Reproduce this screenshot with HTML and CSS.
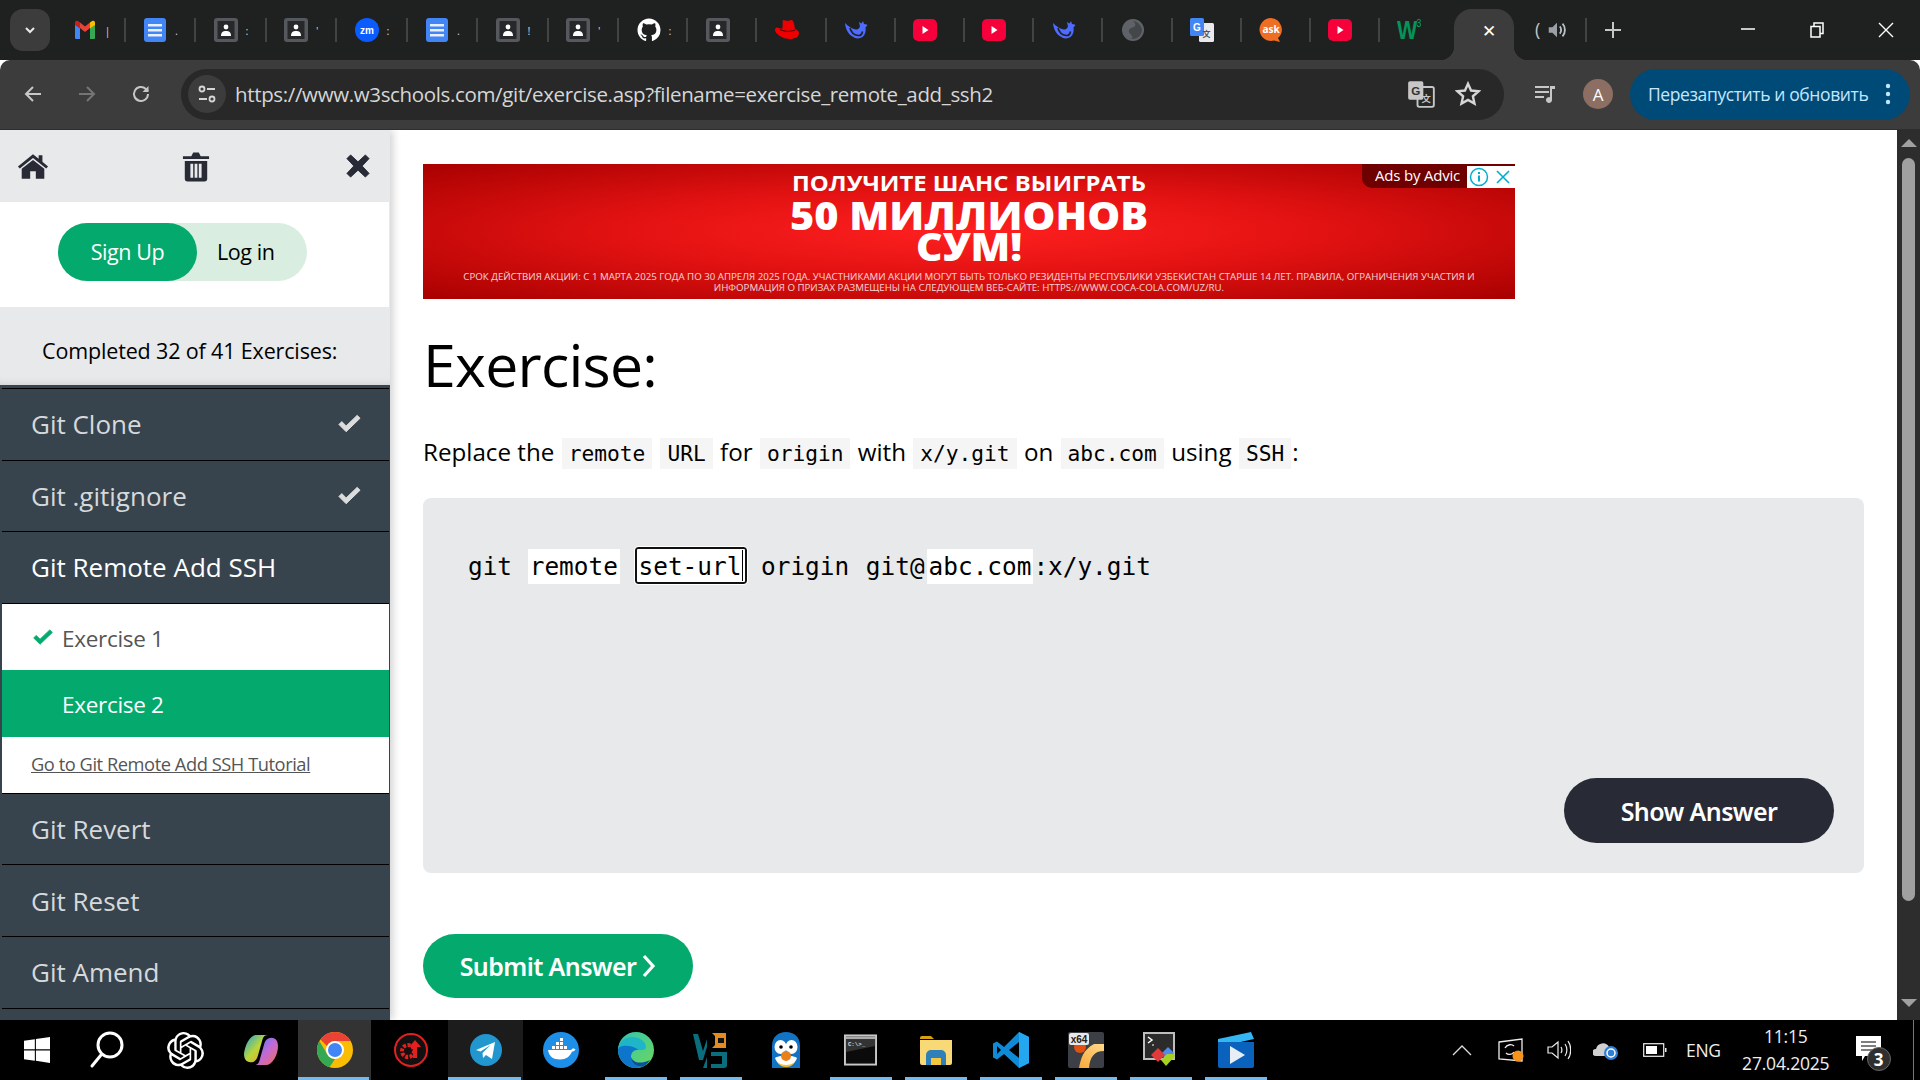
FILE: index.html
```html
<!DOCTYPE html>
<html lang="ru">
<head>
<meta charset="utf-8">
<title>W3Schools Git Exercise</title>
<link rel="stylesheet" href="styles.css">
</head>
<body>
<svg class="defs" aria-hidden="true">
  <symbol id="i-docs" viewBox="0 0 24 24"><rect x="1" width="22" height="24" rx="3" fill="#4285f4"/><path d="M5 6h14v2.4H5zM5 11h14v2.4H5zM5 16h14v2.4H5z" fill="#e8eefc"/></symbol>
  <symbol id="i-contact" viewBox="0 0 24 24"><rect x="0" y="0" width="24" height="24" rx="3" fill="#55585c"/><rect x="3.500" y="3" width="17" height="18" fill="#26282a"/><circle cx="12" cy="9" r="2.400" fill="#fff"/><path d="M7 18c0-4 2-5 5-5s5 1 5 5z" fill="#fff"/></symbol>
  <symbol id="i-yt" viewBox="0 0 24 24"><rect x="0" y="1" width="24" height="22" rx="5" fill="#f5003b"/><path d="M9.500 8v8l6-4z" fill="#fff"/></symbol>
  <symbol id="i-whale" viewBox="0 0 24 24"><path d="M1 5c3 3 7 6 11 6.500 2 .2 3-1 4-3L15 4l2.500 1.500L19 3l1 3c2 0 3.500 1 3.500 1l-2 2.500c.5 3 0 7-3 9.500-3 2-7 2-10-.5C4 16 1.500 11 1 5z" fill="#4d6bfe"/><path d="M6 10c1 4 4 7 8 7.500 2 .2 4-1 4.500-4" stroke="#1f2120" stroke-width="1.600" fill="none"/></symbol>
</svg>

<header class="tabstrip">
  <div class="tabsearch"><svg width="14" height="14" viewBox="0 0 14 14"><path d="M3 5l4 4 4-4" fill="none" stroke="#e8eaed" stroke-width="2"/></svg></div>
  <div class="tab"><svg class="favicon" viewBox="0 0 24 24"><path d="M2 21V6l5 4v11H3a1 1 0 0 1-1-1z" fill="#4285f4"/><path d="M22 21V6l-5 4v11h4a1 1 0 0 0 1-1z" fill="#34a853"/><path d="M7 10l5 4 5-4V4.500l-5 4-5-4z" fill="#ea4335"/><path d="M2 7l5 3.500V4.500L5 3A2 2 0 0 0 2 5z" fill="#c5221f"/><path d="M22 7l-5 3.500V4.500L19 3a2 2 0 0 1 3 2z" fill="#fbbc04"/></svg><span class="tabbit">|</span></div>
  <div class="tab"><svg class="favicon"><use href="#i-docs"/></svg><span class="tabbit">.</span></div>
  <div class="tab"><svg class="favicon"><use href="#i-contact"/></svg><span class="tabbit">:</span></div>
  <div class="tab"><svg class="favicon"><use href="#i-contact"/></svg><span class="tabbit">'</span></div>
  <div class="tab"><svg class="favicon" viewBox="0 0 24 24"><circle cx="12" cy="12" r="12" fill="#0b5cff"/><text x="12" y="16" class="zm">zm</text></svg><span class="tabbit">:</span></div>
  <div class="tab"><svg class="favicon"><use href="#i-docs"/></svg><span class="tabbit">.</span></div>
  <div class="tab"><svg class="favicon"><use href="#i-contact"/></svg><span class="tabbit">!</span></div>
  <div class="tab"><svg class="favicon"><use href="#i-contact"/></svg><span class="tabbit">'</span></div>
  <div class="tab"><svg class="favicon" viewBox="0 0 24 24"><path fill="#fff" d="M12 .5C5.730 .5.500 5.730.500 12c0 5.080 3.290 9.390 7.860 10.910.580.100.790-.250.790-.560v-2c-3.200.700-3.870-1.360-3.870-1.360-.520-1.330-1.280-1.680-1.280-1.680-1.050-.720.080-.700.080-.700 1.160.080 1.770 1.190 1.770 1.190 1.030 1.760 2.700 1.250 3.360.960.100-.750.400-1.250.730-1.540-2.560-.290-5.250-1.280-5.250-5.700 0-1.260.450-2.290 1.190-3.100-.120-.290-.520-1.460.110-3.050 0 0 .970-.310 3.170 1.180a11 11 0 0 1 5.780 0c2.200-1.490 3.170-1.180 3.170-1.180.630 1.590.230 2.760.110 3.050.740.810 1.190 1.840 1.190 3.100 0 4.430-2.700 5.400-5.270 5.690.410.360.780 1.060.780 2.140v3.170c0 .310.210.670.800.560A11.500 11.500 0 0 0 23.500 12C23.500 5.730 18.270.500 12 .500z"/></svg><span class="tabbit">:</span></div>
  <div class="tab"><svg class="favicon"><use href="#i-contact"/></svg></div>
  <div class="tab"><svg class="favicon" viewBox="0 0 24 24"><path d="M8 2c2 0 3 1 4.500 1S15 2 16.500 2c1.500 0 2.500 3 3 6 .3 2 .5 3 .5 3 2.500 1 4 2.500 4 4.500 0 3-4 5.500-9 5.500C8 21 0 16 0 12c0-1 .5-2 1.500-2.500 1.500.5 4 1 6 1 .3-3 0-8.500.5-8.500z" fill="#e00"/><path d="M5 11.500c3 1.500 9 3 15 .5" stroke="#300" stroke-width="1" fill="none"/></svg></div>
  <div class="tab"><svg class="favicon"><use href="#i-whale"/></svg></div>
  <div class="tab"><svg class="favicon"><use href="#i-yt"/></svg></div>
  <div class="tab"><svg class="favicon"><use href="#i-yt"/></svg></div>
  <div class="tab"><svg class="favicon"><use href="#i-whale"/></svg></div>
  <div class="tab"><svg class="favicon" viewBox="0 0 24 24"><circle cx="12" cy="12" r="11" fill="#5f6368"/><path d="M12 3c2.500 2 3 4 1.500 5.500s-4.500 1-5.500 3.500 2 4 3 6-.5 2.500-2 2.500c4 1.500 11-.5 12-8 0-4.500-4-9-9-9.500z" fill="#44474a"/></svg></div>
  <div class="tab"><svg class="favicon" viewBox="0 0 24 24"><rect x="9" y="5" width="15" height="19" rx="1.500" fill="#e8eaed"/><rect width="14" height="18" rx="1.500" fill="#4285f4"/><text x="7" y="13" class="gl">G</text><text x="16.500" y="19" class="gl2">文</text></svg></div>
  <div class="tab"><svg class="favicon" viewBox="0 0 24 24"><path d="M12 0a11.500 11.500 0 1 0 3 22.600l6 1.400-2-4A11.500 11.500 0 0 0 12 0z" fill="#ee6e24"/><text x="12" y="15" class="ask">ask</text></svg></div>
  <div class="tab"><svg class="favicon"><use href="#i-yt"/></svg></div>
  <div class="tab tab-last"><span class="w3">W<sup>3</sup></span></div>
  <div class="tab-active"><span class="tabclose">✕</span></div>
  <div class="tab tab-audio"><span class="paren">(</span><svg width="22" height="22" viewBox="0 0 24 24"><path d="M3 9v6h4l5 5V4L7 9z" fill="#9aa0a6"/><path d="M15 8c2 2 2 6 0 8M18 5c3.500 3.500 3.500 10.500 0 14" stroke="#bdc1c6" stroke-width="2" fill="none"/></svg></div>
  <div class="newtab"><svg width="20" height="20" viewBox="0 0 20 20"><path d="M10 2v16M2 10h16" stroke="#c4c7c5" stroke-width="2"/></svg></div>
  <div class="winctl">
    <span class="wbtn"><svg width="14" height="14" viewBox="0 0 14 14"><path d="M0 7h14" stroke="#fff" stroke-width="1.500"/></svg></span>
    <span class="wbtn"><svg width="14" height="16" viewBox="0 0 14 16"><path d="M1 4.500h9v10.500H1zM4 4.500V1h9v10.500h-3" fill="none" stroke="#fff" stroke-width="1.500"/></svg></span>
    <span class="wbtn"><svg width="16" height="16" viewBox="0 0 16 16"><path d="M1 1l14 14M15 1L1 15" stroke="#fff" stroke-width="1.400"/></svg></span>
  </div>
</header>

<nav class="toolbar">
  <span class="navbtn"><svg width="22" height="22" viewBox="0 0 22 22"><path d="M19 11H4M11 4l-7 7 7 7" fill="none" stroke="#c7c7c7" stroke-width="2"/></svg></span>
  <span class="navbtn"><svg width="22" height="22" viewBox="0 0 22 22"><path d="M3 11h15M11 4l7 7-7 7" fill="none" stroke="#757575" stroke-width="2"/></svg></span>
  <span class="navbtn"><svg width="22" height="22" viewBox="0 0 22 22"><path d="M18 11a7 7 0 1 1-2.200-5.100L18 8" fill="none" stroke="#c7c7c7" stroke-width="2"/><path d="M18.500 3v6h-6" fill="#c7c7c7"/></svg></span>
  <div class="omnibox">
    <span class="siteinfo"><svg width="22" height="22" viewBox="0 0 22 22"><circle cx="6" cy="6" r="2.500" fill="none" stroke="#d6d6d6" stroke-width="1.800"/><path d="M11 6h8M3 16h8" stroke="#d6d6d6" stroke-width="1.800"/><circle cx="16" cy="16" r="2.500" fill="none" stroke="#d6d6d6" stroke-width="1.800"/></svg></span>
    <span class="url">https://www.w3schools.com/git/exercise.asp?filename=exercise_remote_add_ssh2</span>
    <span class="omni-ico omni-tr"><svg width="28" height="28" viewBox="0 0 24 24"><rect x="9" y="6" width="14" height="17" rx="1.500" fill="none" stroke="#c7c7c7" stroke-width="1.600"/><rect x="1" y="1" width="13" height="16" rx="1.500" fill="#c7c7c7"/><text x="7.500" y="13" class="gl gl-dark">G</text><text x="16.500" y="19" class="gl2 gl-light">文</text></svg></span>
    <span class="omni-ico omni-star"><svg width="26" height="26" viewBox="0 0 24 24"><path d="M12 2.500l2.800 6.300 6.900.7-5.200 4.600 1.500 6.800L12 17.400l-6 3.500 1.500-6.800-5.200-4.600 6.900-.7z" fill="none" stroke="#d6d6d6" stroke-width="2.200"/></svg></span>
  </div>
  <span class="queue"><svg width="24" height="24" viewBox="0 0 24 24"><path d="M2 5h14M2 10h14M2 15h9" stroke="#c7c7c7" stroke-width="2"/><path d="M17 4h5v3h-3v11a3 3 0 1 1-2-2.800z" fill="#c7c7c7"/></svg></span>
  <span class="avatar">A</span>
  <div class="update"><span>Перезапустить и обновить</span><svg width="6" height="22" viewBox="0 0 6 22"><circle cx="3" cy="3" r="2.200" fill="#c2e7ff"/><circle cx="3" cy="11" r="2.200" fill="#c2e7ff"/><circle cx="3" cy="19" r="2.200" fill="#c2e7ff"/></svg></div>
</nav>

<div class="main">
  <aside class="sidebar">
    <div class="side-tools">
      <svg width="32" height="27" viewBox="0 0 34 28"><path d="M17 1 1 14l2 2.200L17 5l14 11.200 2-2.200-6-5V2h-4v3.800z" fill="#282a35"/><path d="M5 16.500 17 7l12 9.500V27H20v-8h-6v8H5z" fill="#282a35"/></svg>
      <svg class="tool-trash" width="28" height="31" viewBox="0 0 30 32"><path d="M1 5h9l2-4h6l2 4h9v3H1zM3 10h24v19a3 3 0 0 1-3 3H6a3 3 0 0 1-3-3z" fill="#282a35"/><path d="M9 13h3v15H9zM13.500 13h3v15h-3zM18 13h3v15h-3z" fill="#e7e9eb"/></svg>
      <svg width="24" height="24" viewBox="0 0 26 26"><path d="M5 1 13 8.500 21 1l4 4-7.500 8 7.500 8-4 4-8-7.500L5 25l-4-4 7.500-8L1 5z" fill="#282a35" stroke="#282a35" stroke-linejoin="round"/></svg>
    </div>
    <div class="side-auth">
      <div class="pill"><a class="signup">Sign Up</a><a class="login">Log in</a></div>
    </div>
    <div class="side-progress">Completed 32 of 41 Exercises:</div>
    <div class="side-list">
      <div class="nav-row nav-first">Git Clone<svg class="chk" width="25" height="20" viewBox="0 0 26 20"><path d="M2 10.500 9.500 18 24 4l-3-3L9.500 12 5 7.500z" fill="#dcdcdc" stroke="#dcdcdc" stroke-linejoin="round"/></svg></div>
      <div class="nav-row">Git .gitignore<svg class="chk" width="25" height="20" viewBox="0 0 26 20"><path d="M2 10.500 9.500 18 24 4l-3-3L9.500 12 5 7.500z" fill="#dcdcdc" stroke="#dcdcdc" stroke-linejoin="round"/></svg></div>
      <div class="nav-row nav-open">Git Remote Add SSH</div>
      <div class="subpanel">
        <div class="sub sub-done"><svg width="22" height="17" viewBox="0 0 26 20"><path d="M2 10.500 9.500 18 24 4l-3-3L9.500 12 5 7.500z" fill="#04aa6d" stroke="#04aa6d" stroke-linejoin="round"/></svg><span>Exercise 1</span></div>
        <div class="sub sub-on"><span>Exercise 2</span></div>
        <a class="sub-link">Go to Git Remote Add SSH Tutorial</a>
      </div>
      <div class="nav-row">Git Revert</div>
      <div class="nav-row">Git Reset</div>
      <div class="nav-row">Git Amend</div>
      <div class="nav-row"></div>
    </div>
  </aside>

  <main class="content">
    <div class="ad">
      <div class="ad-l1">ПОЛУЧИТЕ ШАНС ВЫИГРАТЬ</div>
      <div class="ad-l2">50 МИЛЛИОНОВ</div>
      <div class="ad-l3">СУМ!</div>
      <div class="ad-fine">СРОК ДЕЙСТВИЯ АКЦИИ: С 1 МАРТА 2025 ГОДА ПО 30 АПРЕЛЯ 2025 ГОДА. УЧАСТНИКАМИ АКЦИИ МОГУТ БЫТЬ ТОЛЬКО РЕЗИДЕНТЫ РЕСПУБЛИКИ УЗБЕКИСТАН СТАРШЕ 14 ЛЕТ. ПРАВИЛА, ОГРАНИЧЕНИЯ УЧАСТИЯ И<br>ИНФОРМАЦИЯ О ПРИЗАХ РАЗМЕЩЕНЫ НА СЛЕДУЮЩЕМ ВЕБ-САЙТЕ: HTTPS://WWW.COCA-COLA.COM/UZ/RU.</div>
      <div class="ad-badge"><span class="ad-by">Ads by Advic</span><span class="ad-btn"><svg width="20" height="20" viewBox="0 0 20 20"><circle cx="10" cy="10" r="8.500" fill="none" stroke="#00aecd" stroke-width="1.500"/><path d="M10 8.500v6M10 5v2" stroke="#00aecd" stroke-width="2"/></svg></span><span class="ad-btn"><svg width="16" height="16" viewBox="0 0 16 16"><path d="M2 2l12 12M14 2 2 14" stroke="#00aecd" stroke-width="1.600"/></svg></span></div>
    </div>
    <h1 class="title">Exercise:</h1>
    <p class="task">Replace the <code>remote</code> <code>URL</code> for <code>origin</code> with <code>x/y.git</code> on <code>abc.com</code> using <code>SSH</code>:</p>
    <div class="codebox">
      <div class="codeline">git <span class="w">remote</span> <span class="blank">set-url<i class="caret"></i></span> origin <span class="gitat">git@</span><span class="w w-tight">abc.com</span>:x/y.git</div>
      <button class="btn btn-dark">Show Answer</button>
    </div>
    <button class="btn btn-green">Submit Answer <svg width="14" height="24" viewBox="0 0 14 24"><path d="M2 2l9 10-9 10" fill="none" stroke="#fff" stroke-width="3.200"/></svg></button>
  </main>

  <div class="scrollbar">
    <span class="sb-up"></span>
    <span class="sb-thumb"></span>
    <span class="sb-down"></span>
  </div>
</div>

<footer class="taskbar">
  <div class="tb tb-first"><svg width="26" height="26" viewBox="0 0 24 24"><path d="M0 3.500 10 2v9.300H0zM11 1.900 24 0v11.300H11zM0 12.500h10v9.400L0 20.500zM11 12.500h13V24l-13-2z" fill="#fff"/></svg></div>
  <div class="tb tb-search"><svg width="36" height="40" viewBox="0 0 36 40"><circle cx="21" cy="15" r="12" fill="none" stroke="#fff" stroke-width="3"/><path d="M12 25 3 36" stroke="#fff" stroke-width="3" stroke-linecap="round"/></svg></div>
  <div class="tb"><svg width="37" height="37" viewBox="0 0 24 24"><path fill="#fff" d="M22.282 9.821a5.985 5.985 0 0 0-.516-4.91 6.046 6.046 0 0 0-6.51-2.9A6.065 6.065 0 0 0 4.981 4.18a5.985 5.985 0 0 0-3.998 2.9 6.046 6.046 0 0 0 .743 7.097 5.98 5.98 0 0 0 .51 4.911 6.051 6.051 0 0 0 6.515 2.9A5.985 5.985 0 0 0 13.26 24a6.056 6.056 0 0 0 5.772-4.206 5.99 5.99 0 0 0 3.997-2.9 6.056 6.056 0 0 0-.747-7.073zM13.26 22.43a4.476 4.476 0 0 1-2.876-1.04l.141-.081 4.779-2.758a.795.795 0 0 0 .392-.681v-6.737l2.02 1.168a.071.071 0 0 1 .038.052v5.583a4.504 4.504 0 0 1-4.494 4.494zM3.6 18.304a4.47 4.47 0 0 1-.535-3.014l.142.085 4.783 2.759a.771.771 0 0 0 .78 0l5.843-3.369v2.332a.08.08 0 0 1-.033.062L9.74 19.95a4.5 4.5 0 0 1-6.14-1.646zM2.34 7.896a4.485 4.485 0 0 1 2.366-1.973V11.6a.766.766 0 0 0 .388.676l5.815 3.355-2.02 1.168a.076.076 0 0 1-.071 0l-4.83-2.786A4.504 4.504 0 0 1 2.34 7.872zm16.597 3.855l-5.833-3.387L15.119 7.2a.076.076 0 0 1 .071 0l4.83 2.791a4.494 4.494 0 0 1-.676 8.105v-5.678a.79.79 0 0 0-.407-.667zm2.01-3.023l-.141-.085-4.774-2.782a.776.776 0 0 0-.785 0L9.409 9.23V6.897a.066.066 0 0 1 .028-.061l4.83-2.787a4.5 4.5 0 0 1 6.68 4.66zm-12.64 4.135l-2.02-1.164a.08.08 0 0 1-.038-.057V6.075a4.5 4.5 0 0 1 7.375-3.453l-.142.08L8.704 5.46a.795.795 0 0 0-.393.681zm1.097-2.365l2.602-1.5 2.607 1.5v2.999l-2.597 1.5-2.607-1.5z"/></svg></div>
  <div class="tb"><svg width="34" height="36" viewBox="0 0 36 36"><defs><linearGradient id="cp1" x1="0" y1="0" x2="1" y2="1"><stop offset="0" stop-color="#1ba1e2"/><stop offset=".5" stop-color="#b9d63a"/><stop offset="1" stop-color="#f1a02a"/></linearGradient><linearGradient id="cp2" x1="0" y1="0" x2="1" y2="1"><stop offset="0" stop-color="#3b82f6"/><stop offset=".5" stop-color="#c06ad8"/><stop offset="1" stop-color="#f56a5b"/></linearGradient></defs><path d="M13 2h12c-4 0-5 3-6 7l-4 14c-1 4-3 8-8 8-5 0-7-4-7-9C1 13 6 2 13 2z" fill="url(#cp1)"/><path d="M23 34H11c4 0 5-3 6-7l4-14c1-4 3-8 8-8 5 0 7 4 7 9 0 9-6 20-13 20z" fill="url(#cp2)"/></svg></div>
  <div class="tb tb-chrome on wide"><svg width="36" height="36" viewBox="0 0 36 36"><circle cx="18" cy="18" r="18" fill="#fbbc04"/><path d="M18 0a18 18 0 0 1 15.600 9H18a9 9 0 0 0-8 5L3.400 7.400A18 18 0 0 1 18 0z" fill="#ea4335"/><path d="M2.400 9 10 22a9 9 0 0 0 8 5l-5.500 8.200A18 18 0 0 1 2.400 9z" fill="#34a853"/><circle cx="18" cy="18" r="9" fill="#fff"/><circle cx="18" cy="18" r="7" fill="#4285f4"/></svg></div>
  <div class="tb"><svg width="36" height="36" viewBox="0 0 36 36"><circle cx="18" cy="18" r="16" fill="#111" stroke="#e1201f" stroke-width="2"/><circle cx="15" cy="19" r="6" fill="none" stroke="#e1201f" stroke-width="4" stroke-dasharray="3 1.500"/><path d="M22 8l6 7h-4v11h-4V15h-4z" fill="#e1201f"/></svg></div>
  <div class="tb tb-tg on wide"><svg width="32" height="32" viewBox="0 0 32 32"><circle cx="16" cy="16" r="16" fill="#2196cf"/><path d="M6 16 25 8l-3 17-6-4-3 3-.5-5 8-8-10 6.500z" fill="#fff"/></svg></div>
  <div class="tb"><svg width="36" height="36" viewBox="0 0 36 36"><circle cx="18" cy="18" r="18" fill="#1d8fe8"/><path d="M5 18h22c1 0 2-.5 2.500-1.500 1.500 0 2.500.5 3 1-1 1.500-2 2-3.500 2-2 5-6 8-12 8-7 0-11-3-12-9.500z" fill="#fff"/><path d="M9 14h3v3H9zM13 14h3v3h-3zM17 14h3v3h-3zM21 14h3v3h-3zM13 10h3v3h-3zM17 10h3v3h-3zM17 6h3v3h-3z" fill="#fff"/></svg></div>
  <div class="tb on"><svg width="36" height="36" viewBox="0 0 36 36"><defs><linearGradient id="ed1" x1="0" y1="0" x2="1" y2="1"><stop offset="0" stop-color="#2fc6b4"/><stop offset="1" stop-color="#6fd65a"/></linearGradient></defs><circle cx="18" cy="18" r="18" fill="url(#ed1)"/><path d="M0 18C1 8 8 5 14 5c8 0 14 5 14 10 0 3-3 3-7 3-6 0-14-6-21 0z" fill="#1fb5c9"/><path d="M0 18c0 10 8 18 18 18 3 0 6-1 8-2-7 2-13-3-13-9 0-5 4-8 8-7-7-5-20-6-21 0z" fill="#0d76cc"/><path d="M26 34c-6 2-13-2-13-9 2 5 8 8 19 3-2 3-4 5-6 6z" fill="#0b4f9e"/></svg></div>
  <div class="tb on"><svg width="36" height="38" viewBox="0 0 36 38"><path d="M0 3h5l5 17 4-12v8l-4 13H6z" fill="#0b6e7d"/><path d="M19 2h14v15H19l3-3V5z" fill="#e58a1f"/><rect x="25" y="7" width="6" height="5" fill="#111"/><path d="M18 21h16v13c0 2-1 3-3 3H18v-4h11V25H18z" fill="#0b6e7d"/><path d="M14 26v11h-4z" fill="#0b6e7d"/></svg></div>
  <div class="tb"><svg width="28" height="36" viewBox="0 0 28 36"><path d="M0 36V14C0 5 6 0 14 0s14 5 14 14v22z" fill="#1273c4"/><ellipse cx="8.500" cy="15" rx="6" ry="7" fill="#fff"/><ellipse cx="19.500" cy="15" rx="6" ry="7" fill="#fff"/><path d="M3 26c3-3 19-3 22 0-2 6-7 8-11 8s-9-2-11-8z" fill="#fff"/><path d="M5 30c5 4 13 4 18 0-2 3-5 5-9 5s-7-2-9-5z" fill="#f8c21c"/><circle cx="9" cy="15" r="1.800"/><circle cx="19" cy="15" r="1.800"/><circle cx="14" cy="24" r="5" fill="#e8801c"/></svg></div>
  <div class="tb on"><svg width="33" height="32" viewBox="0 0 34 32"><rect x="1" y="1" width="32" height="30" fill="#0b0b0b" stroke="#c8c8c8" stroke-width="2"/><rect x="2" y="2" width="30" height="3" fill="#aaa"/><path d="M2 5h30v7L2 18z" fill="#333"/><text x="4" y="12" class="cmd">C:\&gt;_</text></svg></div>
  <div class="tb on"><svg width="32" height="32" viewBox="0 0 32 32"><path d="M0 4a2 2 0 0 1 2-2h9l3 3h-14z" fill="#d79f12"/><path d="M0 6h32v23a2 2 0 0 1-2 2H2a2 2 0 0 1-2-2z" fill="#f9d976"/><path d="M6 31V21a5 5 0 0 1 5-5h10a5 5 0 0 1 5 5v10h-5v-7H11v7z" fill="#2f7fb8"/><path d="M11 24h10v7H11z" fill="#f5c73f"/></svg></div>
  <div class="tb on"><svg width="36" height="36" viewBox="0 0 36 36"><path d="M26 0l10 5v26l-10 5-15-14-7 5.500-4-2V11.500l4-2 7 5.500z" fill="#0e8ad6"/><path d="M26 0l10 5v26l-10 5z" fill="#24a7f0"/><path d="M26 10v16l-10-8z" fill="#000"/><path d="M4 14v8l4-4z" fill="#000"/></svg></div>
  <div class="tb on"><svg width="36" height="36" viewBox="0 0 36 36"><defs><linearGradient id="x64" x1="0" y1="1" x2="1" y2="0"><stop offset="0" stop-color="#f8a83a"/><stop offset="1" stop-color="#ffd98a"/></linearGradient></defs><rect width="36" height="36" rx="2" fill="#3c3f46"/><path d="M11 36c2-10 4-18 15-24h10v7c-10 0-14 6-15 17z" fill="url(#x64)"/><circle cx="12" cy="15" r="6" fill="#e2510f"/><rect x="1" y="1" width="20" height="12" rx="2" fill="#e8e8e8"/><text x="11" y="10.500" class="x64">x64</text></svg></div>
  <div class="tb on"><svg width="36" height="36" viewBox="0 0 36 36"><rect x="1" y="1" width="30" height="26" fill="#2b2b2b" stroke="#bdbdbd" stroke-width="2"/><path d="M5 5l4 3-4 3" fill="none" stroke="#fff" stroke-width="1.500"/><path d="M9 13h2" stroke="#fff"/><path d="M18 22l7-7 6 6-7 7z" fill="#4e8af0"/><path d="M8 23l7-7 7 7-7 7z" fill="#e03a3a"/><path d="M18 28l6-6 7 0 1 2-9 10z" fill="#a7d11f"/></svg></div>
  <div class="tb on"><svg width="36" height="36" viewBox="0 0 36 36"><path d="M0 7l33-7 3 7-36 8z" fill="#34b6f2"/><path d="M0 10h36v24a2 2 0 0 1-2 2H2a2 2 0 0 1-2-2z" fill="#0a62bd"/><path d="M12 14l15 9-15 9z" fill="#e8eef5"/></svg></div>
  <div class="tray">
    <svg class="t-chev" width="20" height="12" viewBox="0 0 20 12"><path d="M1 11 10 2l9 9" fill="none" stroke="#ddd" stroke-width="1.300"/></svg>
    <span class="t-sync"><svg width="26" height="24" viewBox="0 0 26 24"><path d="M1 4 24 1v22L1 21z" fill="none" stroke="#eee" stroke-width="1.300"/><path d="M7 10c2-4 7-4 9-2M16 14c-2 3-6 3-8 1" stroke="#eee" fill="none" stroke-width="1.300"/><circle cx="20" cy="18" r="5.500" fill="#f7931a"/></svg></span>
    <svg class="t-vol" width="24" height="20" viewBox="0 0 24 20"><path d="M1 7h4l6-5v16l-6-5H1z" fill="none" stroke="#eee" stroke-width="1.200"/><path d="M14 7c1.200 2 1.200 4 0 6M18 4c2.500 3.500 2.500 8.500 0 12M21 1c3.600 5 3.600 13 0 18" fill="none" stroke="#eee" stroke-width="1.200"/></svg>
    <svg class="t-cloud" width="26" height="20" viewBox="0 0 26 20"><path d="M3 16a3.500 3.500 0 0 1 0-7 7 7 0 0 1 13-2 5 5 0 0 1 3 9z" fill="#d0d0d0"/><circle cx="18" cy="13" r="7" fill="#2f7fd8"/><circle cx="18" cy="13" r="4" fill="none" stroke="#fff" stroke-width="1.500"/></svg>
    <svg class="t-batt" width="24" height="14" viewBox="0 0 24 14"><rect x=".7" y=".7" width="20" height="12.600" fill="none" stroke="#eee" stroke-width="1.200"/><rect x="3" y="3" width="11" height="8" fill="#fff"/><rect x="22" y="5" width="1.500" height="4" fill="#eee"/></svg>
    <span class="t-lang">ENG</span>
    <span class="t-clock"><span>11:15</span><span>27.04.2025</span></span>
    <span class="t-note"><svg width="25" height="28" viewBox="0 0 25 28"><path d="M0 0h25v20H9l-3 5v-5H0z" fill="#fff"/><path d="M5 6h15M5 10h15M5 14h15" stroke="#000" stroke-width="1.200"/></svg><b class="t-badge">3</b></span>
    <span class="t-show"></span>
  </div>
</footer>
</body>
</html>
```

FILE: styles.css
```css
* { box-sizing: border-box; }
html, body { margin: 0; height: 100%; }
body { width: 1920px; height: 1080px; overflow: hidden; background: #fff; font-family: "Open Sans", "Noto Sans", sans-serif; display: flex; flex-direction: column; }
.defs { position: absolute; width: 0; height: 0; }

/* Tab strip */
.tabstrip { height: 60px; flex: none; background: #1f2120; display: flex; align-items: center; padding-left: 10px; color: #e3e3e3; }
.tabsearch { width: 40px; height: 42px; margin: 0 5px 0 0; border-radius: 13px; background: #3c3c3c; display: flex; align-items: center; justify-content: center; }
.tab { width: 70.500px; height: 24px; flex: none; display: flex; align-items: center; position: relative; padding-left: 17.500px; border-right: 2px solid #414344; }
.tab:nth-child(n+10) { width: 69.200px; }
.tab.tab-last { width: 70px; border-right: 0; }
.favicon { width: 24px; height: 24px; flex: none; }
.tabbit { margin-left: 8px; font-size: 11px; color: #d0d0d0; line-height: 1; }
.zm { font: 700 10px "Liberation Sans", sans-serif; fill: #fff; text-anchor: middle; }
.gl { font: 700 10px "Liberation Sans", sans-serif; fill: #fff; text-anchor: middle; }
.gl-dark { fill: #333; }
.gl2 { font: 700 8px "Noto Sans CJK SC", sans-serif; fill: #555; text-anchor: middle; }
.gl-light { fill: #c7c7c7; }
.ask { font: 700 10px "Open Sans", sans-serif; fill: #fff; text-anchor: middle; }
.cmd { font: 700 6px "Liberation Mono", monospace; fill: #ddd; }
.x64 { font: 700 10px "Liberation Sans", sans-serif; fill: #222; text-anchor: middle; }
.w3 { font: 800 25px "Liberation Sans", sans-serif; color: #04945a; line-height: 24px; margin-left: -1px; letter-spacing: -1px; transform: scaleX(.86); transform-origin: left; }
.w3 sup { font-size: 10px; font-weight: 400; color: #04aa6d; vertical-align: 12px; line-height: 0; }
.tab-active { width: 60px; height: 51px; margin: 9px 0 0 4px; flex: none; background: #3c3c3c; border-radius: 18px 18px 0 0; position: relative; display: flex; align-items: center; justify-content: center; padding: 0 0 8px 10px; }
.tab-active::before, .tab-active::after { content: ""; position: absolute; bottom: 0; width: 14px; height: 14px; }
.tab-active::before { left: -14px; background: radial-gradient(circle at 0 0, transparent 14px, #3c3c3c 14.500px); }
.tab-active::after { right: -14px; background: radial-gradient(circle at 100% 0, transparent 14px, #3c3c3c 14.500px); }
.tabclose { font: 400 17px "DejaVu Sans", sans-serif; color: #fff; }
.tab.tab-audio { width: 73px; padding-left: 21px; gap: 6px; }
.paren { font-size: 18px; color: #c7c7c7; line-height: 1; margin-top: -2px; }
.newtab { width: 52px; display: flex; justify-content: center; }
.winctl { margin-left: auto; display: flex; }
.wbtn { width: 69px; display: flex; justify-content: center; }

/* Toolbar */
.toolbar { height: 70px; flex: none; background: #3c3c3c; display: flex; align-items: center; padding: 0 10px 1px 6px; border-radius: 10px 10px 0 0; position: relative; border-bottom: 1px solid #2e2e2e; }
.navbtn { width: 54px; display: flex; justify-content: center; }
.omnibox { width: 1323px; height: 51px; margin-left: 13px; background: #282828; border-radius: 26px; display: flex; align-items: center; padding-left: 7px; }
.siteinfo { width: 38px; height: 38px; border-radius: 50%; background: #3c3c3c; display: flex; align-items: center; justify-content: center; flex: none; }
.url { margin-left: 9px; font-size: 20.500px; color: #d6d6d6; white-space: nowrap; letter-spacing: -.35px; }
.omni-ico { display: flex; }
.omni-tr { margin-left: auto; margin-right: 20px; }
.omni-star { margin-right: 23px; }
.queue { width: 38px; margin-left: 22px; display: flex; justify-content: center; }
.avatar { width: 30px; height: 30px; margin-left: 19px; border-radius: 50%; background: #8d6e63; color: #fff; font: 400 17px "Open Sans", sans-serif; display: flex; align-items: center; justify-content: center; }
.update { width: 280px; height: 51px; margin-left: 17px; background: #004a77; border-radius: 26px; color: #c2e7ff; font-size: 17.500px; display: flex; align-items: center; padding-left: 18px; white-space: nowrap; letter-spacing: -.39px; }
.update svg { margin-left: 17px; flex: none; }

/* Main */
.main { height: 890px; flex: none; display: flex; overflow: hidden; }
.sidebar { width: 390px; flex: none; background: #e7e9eb; display: flex; flex-direction: column; position: relative; box-shadow: 3px 0 8px rgba(0,0,0,.18); z-index: 1; }
.side-tools { height: 72px; flex: none; display: flex; align-items: center; justify-content: space-between; padding: 0 20px 0 17px; }
.tool-trash { margin-right: 4px; }
.side-auth { height: 105px; flex: none; background: #fff; margin-right: 1px; display: flex; align-items: flex-start; padding: 21px 0 0 58px; }
.pill { width: 249px; height: 58px; border-radius: 29px; background: #d9eee1; display: flex; align-items: center; font-size: 21.500px; letter-spacing: -.4px; }
.signup { width: 139px; height: 58px; border-radius: 29px; background: #04aa6d; color: #fff; display: flex; align-items: center; justify-content: center; padding-bottom: 2px; }
.login { flex: 1; padding: 0 0 2px 20px; color: #000; }
.side-progress { height: 78px; flex: none; display: flex; align-items: center; padding: 8px 0 0 42px; font-size: 21.500px; color: #000; letter-spacing: -.15px; box-shadow: inset 0 -8px 8px -8px rgba(0,0,0,.15); }
.side-list { flex: 1; background: #38444d; padding: 3px 1px 0 2px; }
.nav-row { height: 71.600px; border-top: 1px solid #000; padding: 0 0 0 29px; display: flex; align-items: center; font-size: 26px; color: #d6d9db; position: relative; }
.nav-open { color: #fff; }
.chk { position: absolute; right: 27px; top: 25px; }
.subpanel { border-top: 1px solid #000; background: #fff; height: 190px; display: flex; flex-direction: column; }
.sub { height: 66.500px; flex: none; display: flex; align-items: center; font-size: 22.500px; letter-spacing: -.3px; padding: 2px 0 0 60px; color: #555; position: relative; }
.sub-done svg { position: absolute; left: 30px; top: 25px; }
.sub-on { background: #04aa6d; color: #fff; }
.sub-link { padding: 14px 0 0 29px; font-size: 18.300px; color: #555; text-decoration: underline; letter-spacing: -.45px; }

/* Content */
.content { flex: 1; padding: 34px 33px 0; display: flex; flex-direction: column; align-items: flex-start; color: #000; }
.ad { width: 1092px; height: 135px; flex: none; position: relative; overflow: hidden; background: radial-gradient(ellipse at 50% 50%, #ff2020 0%, #e31212 45%, #a80000 100%); color: #fff; text-align: center; font-family: "Open Sans", sans-serif; }
.ad-l1 { margin-top: 7px; font-size: 21.500px; font-weight: 700; line-height: 24px; transform: scaleX(1.11); }
.ad-l2 { font-size: 38px; font-weight: 800; line-height: 38px; margin-top: 1px; transform: scaleX(1.09); }
.ad-l3 { font-size: 38px; font-weight: 800; line-height: 26px; margin-top: -1.500px; transform: scaleX(1.08); }
.ad-fine { margin-top: 12px; font-size: 9.700px; line-height: 11px; opacity: .82; white-space: nowrap; }
.ad-badge { position: absolute; right: 0; top: 0; width: 153px; height: 24px; background: #6e0000; border-radius: 0 0 0 10px; display: flex; align-items: flex-start; text-align: left; }
.ad-by { width: 105px; padding-left: 13px; font-size: 15px; line-height: 22px; white-space: nowrap; overflow: hidden; letter-spacing: -.2px; }
.ad-btn { width: 24px; height: 22px; margin-top: 2px; background: #fff; display: flex; align-items: center; justify-content: center; }
.title { margin: 21px 0 0; font-size: 59px; font-weight: 400; line-height: 88px; letter-spacing: -.75px; }
.task { margin: 27px 0 0; font-size: 24.200px; line-height: 34px; white-space: nowrap; }
.task code { font: 21.200px "DejaVu Sans Mono", monospace; background: #f5f5f5; padding: 3px 7px; margin: 0 1px; letter-spacing: 0; }
.codebox { width: 1441px; height: 375px; margin-top: 29px; flex: none; background: #e7e9eb; border-radius: 8px; padding: 50px 30px 30px 45px; display: flex; flex-direction: column; }
.codeline { font: 24.400px/35px "DejaVu Sans Mono", monospace; white-space: pre; color: #000; }
.w { background: #fff; display: inline-block; padding: 0 2px; height: 35px; margin-left: 1px; }
.w-tight { margin-left: 2px; }
.gitat { margin-left: 2px; }
.blank { display: inline-block; height: 37px; margin: -1px -1px -1px 0; background: #fff; border: 2px solid #111; border-radius: 3px; padding: 0 2px; outline: 1px solid #fff; position: relative; }
.caret { display: inline-block; width: 1px; height: 31px; background: #000; margin-left: 1px; vertical-align: -6px; }
.btn { border: 0; border-radius: 33px; font: 600 25px "Noto Sans", sans-serif; color: #fff; letter-spacing: -.6px; display: flex; align-items: center; justify-content: center; }
.btn-dark { width: 270px; height: 65px; margin-top: auto; align-self: flex-end; background: #282a35; }
.btn-green { width: 270px; height: 64px; margin-top: 61px; background: #04aa6d; gap: 6px; }

/* Scrollbar */
.scrollbar { width: 23px; flex: none; background: #2d2d2d; display: flex; flex-direction: column; align-items: center; position: relative; }
.sb-up { margin-top: 9px; width: 0; height: 0; border: 8px solid transparent; border-top: 0; border-bottom: 8px solid #a0a0a0; }
.sb-thumb { margin-top: 11px; width: 13px; height: 743px; border-radius: 7px; background: #a0a0a0; }
.sb-down { margin-top: 98px; width: 0; height: 0; border: 8px solid transparent; border-bottom: 0; border-top: 8px solid #a0a0a0; }

/* Taskbar */
.taskbar { height: 60px; flex: none; background: #000; display: flex; align-items: stretch; position: relative; z-index: 2; }
.tb { width: 75px; flex: none; display: flex; align-items: center; justify-content: center; position: relative; }
.tb-first { width: 73px; }
.tb-search svg { margin-right: 7px; }
.tb.on::after { content: ""; position: absolute; left: 7px; right: 6px; bottom: 0; height: 3px; background: #76b9ed; }
.tb.wide::after { left: 0; right: 2px; }
.tb-chrome { background: #333; border-right: 2px solid #000; }
.tb-tg { background: #1c1c1c; }
.tray { flex: 1; display: flex; align-items: center; color: #eee; position: relative; padding-left: 179px; }
.t-chev { flex: none; }
.t-sync { margin-left: 26px; display: flex; }
.t-vol { margin-left: 23px; flex: none; }
.t-cloud { margin-left: 22px; flex: none; }
.t-batt { margin-left: 24px; flex: none; }
.t-lang { margin-left: 19px; font-size: 17.500px; letter-spacing: -.3px; }
.t-clock { width: 90px; margin-left: 20px; display: flex; flex-direction: column; align-items: center; font-size: 17.500px; line-height: 27px; letter-spacing: -.2px; white-space: nowrap; }
.t-note { margin-left: 25px; position: relative; display: flex; }
.t-badge { position: absolute; left: 11px; top: 11px; width: 24px; height: 24px; border-radius: 50%; background: #2f2f2f; border: 1px solid #666; font: 700 17px "Open Sans", sans-serif; color: #fff; display: flex; align-items: center; justify-content: center; }
.t-show { position: absolute; right: 6px; top: 0; bottom: 0; width: 1px; background: #777; }
```
